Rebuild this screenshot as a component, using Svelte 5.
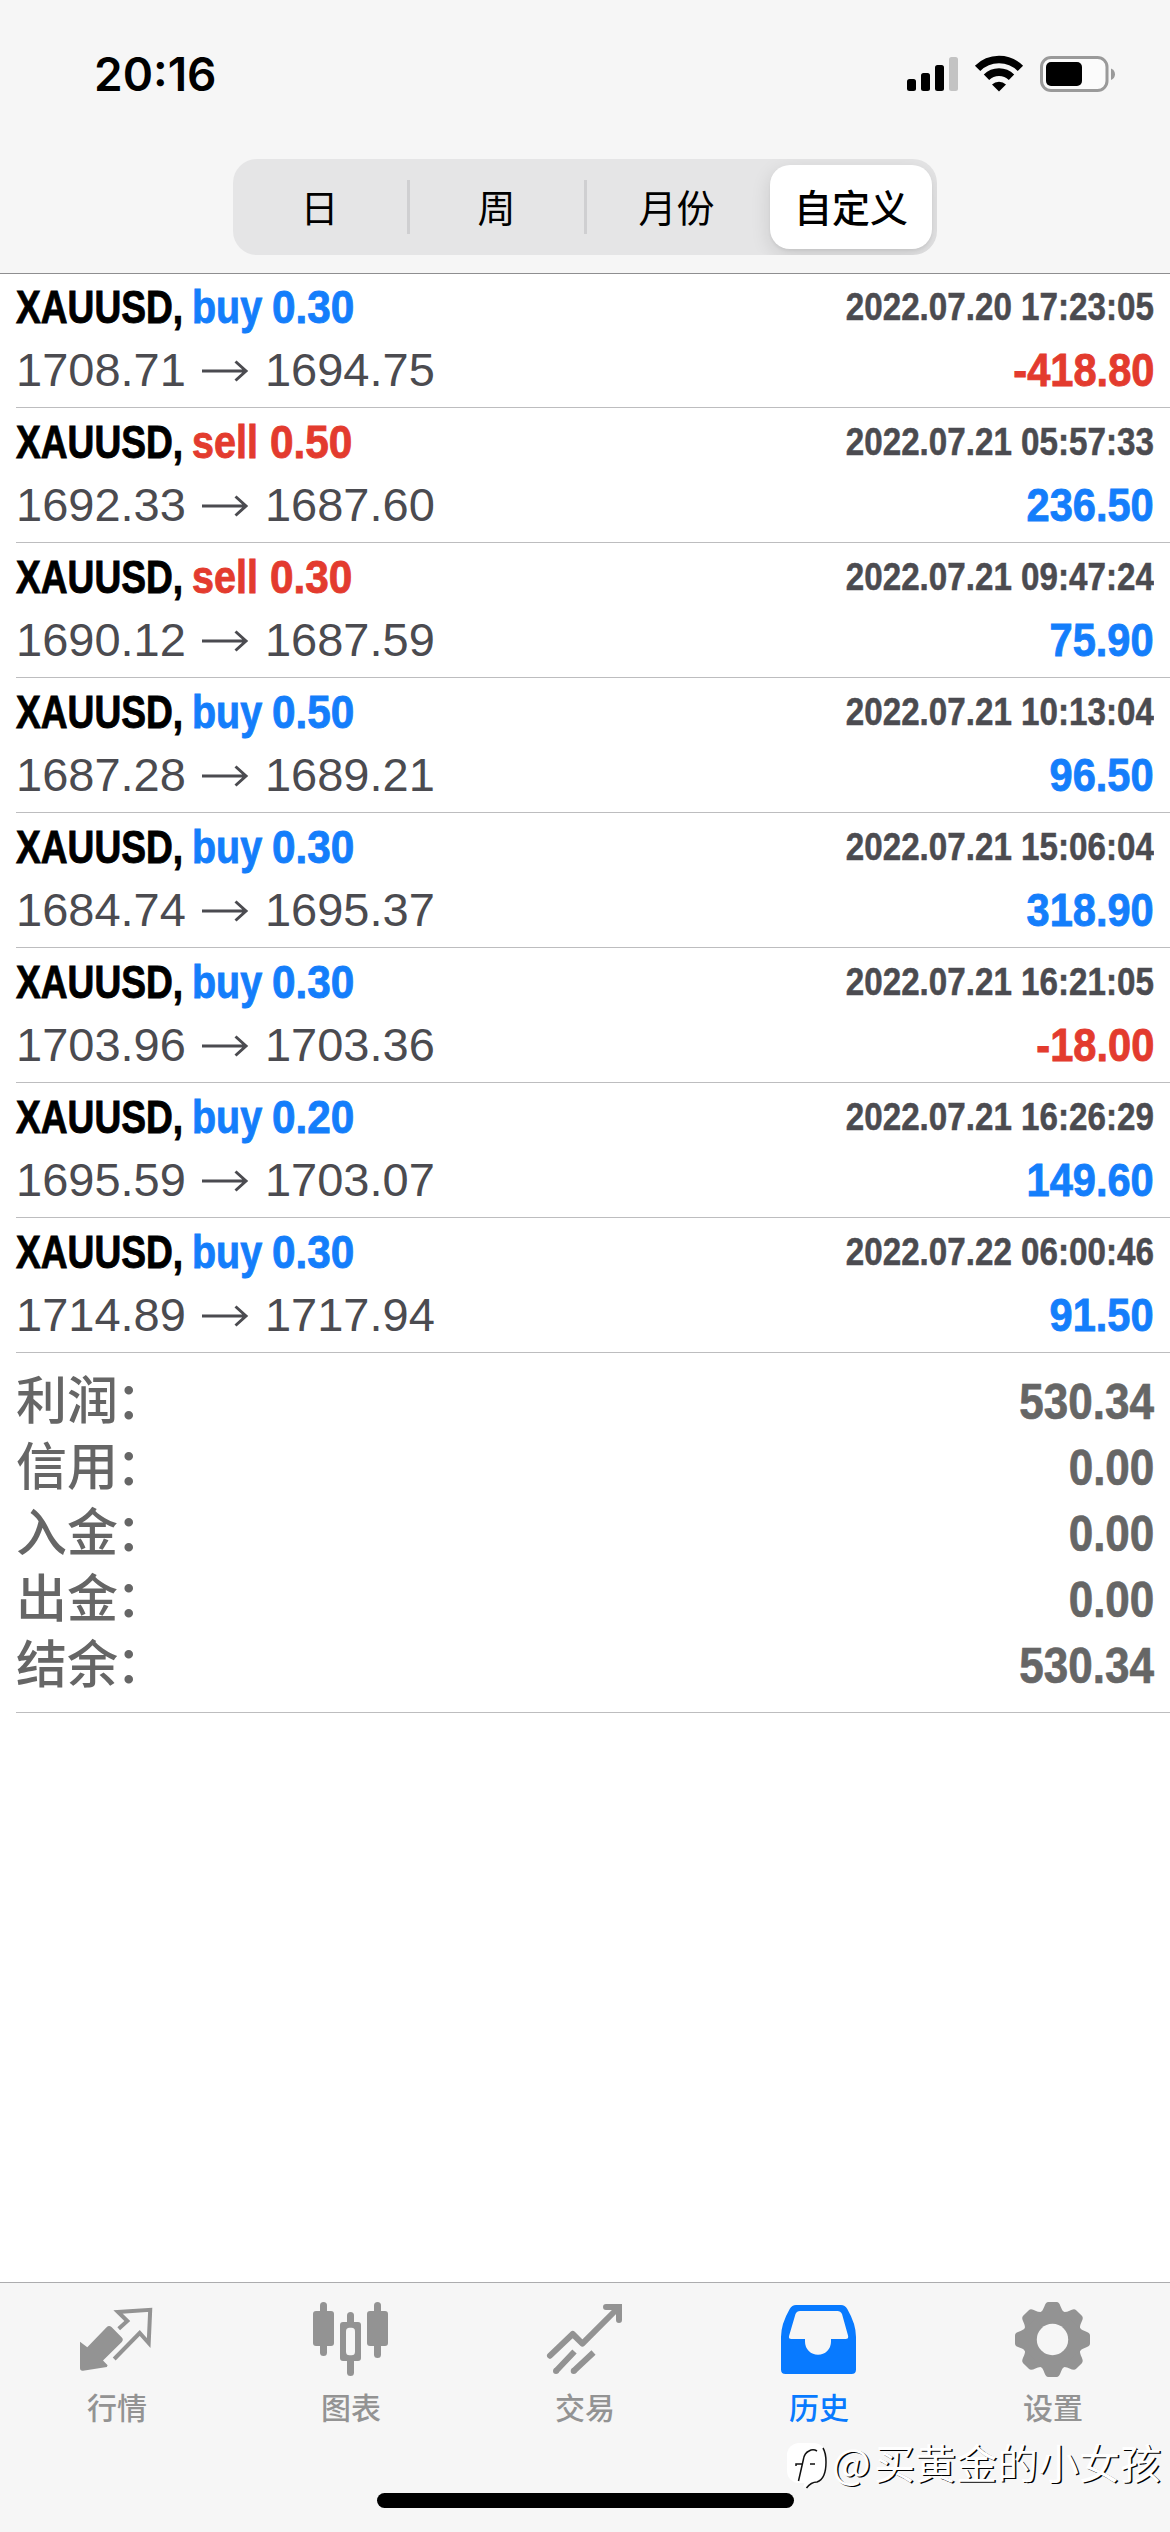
<script lang="ts">
  type Deal = {
    symbol: string;
    side: 'buy' | 'sell';
    volume: string;
    open: string;
    close: string;
    time: string;
    profit: string;
  };

  const periods = ['日', '周', '月份', '自定义'];
  let period = $state('自定义');

  const deals: Deal[] = [
    { symbol: 'XAUUSD', side: 'buy', volume: '0.30', open: '1708.71', close: '1694.75', time: '2022.07.20 17:23:05', profit: '-418.80' },
    { symbol: 'XAUUSD', side: 'sell', volume: '0.50', open: '1692.33', close: '1687.60', time: '2022.07.21 05:57:33', profit: '236.50' },
    { symbol: 'XAUUSD', side: 'sell', volume: '0.30', open: '1690.12', close: '1687.59', time: '2022.07.21 09:47:24', profit: '75.90' },
    { symbol: 'XAUUSD', side: 'buy', volume: '0.50', open: '1687.28', close: '1689.21', time: '2022.07.21 10:13:04', profit: '96.50' },
    { symbol: 'XAUUSD', side: 'buy', volume: '0.30', open: '1684.74', close: '1695.37', time: '2022.07.21 15:06:04', profit: '318.90' },
    { symbol: 'XAUUSD', side: 'buy', volume: '0.30', open: '1703.96', close: '1703.36', time: '2022.07.21 16:21:05', profit: '-18.00' },
    { symbol: 'XAUUSD', side: 'buy', volume: '0.20', open: '1695.59', close: '1703.07', time: '2022.07.21 16:26:29', profit: '149.60' },
    { symbol: 'XAUUSD', side: 'buy', volume: '0.30', open: '1714.89', close: '1717.94', time: '2022.07.22 06:00:46', profit: '91.50' },
  ];

  const summary = [
    { label: '利润', value: '530.34' },
    { label: '信用', value: '0.00' },
    { label: '入金', value: '0.00' },
    { label: '出金', value: '0.00' },
    { label: '结余', value: '530.34' },
  ];

  const tabs = [
    { id: 'quotes', label: '行情' },
    { id: 'chart', label: '图表' },
    { id: 'trade', label: '交易' },
    { id: 'history', label: '历史' },
    { id: 'settings', label: '设置' },
  ];
  let tab = $state('history');

  const teeth = [0, 45, 90, 135, 180, 225, 270, 315];
</script>

<div class="screen">
  <header class="top">
    <div class="status">
      <span class="clock">20:16</span>
      <div class="indicators">
        <svg class="signal" viewBox="0 0 52 36" aria-hidden="true">
          <rect x="0" y="23" width="9" height="12" rx="2.5" />
          <rect x="14" y="17" width="9" height="18" rx="2.5" />
          <rect x="28" y="9" width="9" height="26" rx="2.5" />
          <rect x="42" y="1" width="9" height="34" rx="2.5" fill="#c3c3c3" />
        </svg>
        <svg class="wifi" viewBox="0 0 50 38" aria-hidden="true">
          <g fill="none" stroke="#000" stroke-width="7.6">
            <path d="M3.6 13.4a30.2 30.2 0 0 1 42.8 0" />
            <path d="M12.5 22.3a17.6 17.6 0 0 1 25 0" />
          </g>
          <path d="M18 29.5a10 10 0 0 1 14 0L25 36.6z" />
        </svg>
        <svg class="battery" viewBox="0 0 76 38" aria-hidden="true">
          <rect x="1.5" y="2.5" width="65.5" height="33" rx="9.5" fill="#fbfbfb" stroke="#9a9a9a" stroke-width="3" />
          <rect x="6" y="7" width="36" height="24" rx="5" />
          <path d="M71 13.5c5.3 1.8 5.3 9.7 0 11.5z" fill="#9a9a9a" />
        </svg>
      </div>
    </div>

    <div class="segments">
      {#each periods as name (name)}
        <button class="segment" class:selected={name === period} onclick={() => (period = name)}>
          {name}
        </button>
      {/each}
    </div>
  </header>

  <main>
    {#each deals as deal (deal.time)}
      <article class="deal">
        <div class="line">
          <div class="title">
            <span class="symbol"><b>{deal.symbol},</b></span>
            <span class="side {deal.side}"><b>{deal.side}</b></span>
            <span class="volume {deal.side}"><b>{deal.volume}</b></span>
          </div>
          <span class="time">{deal.time}</span>
        </div>
        <div class="line">
          <div class="prices">
            <span>{deal.open}</span>
            <svg class="arrow" viewBox="0 0 48 24" aria-hidden="true">
              <path d="M1 12H45M34.5 2.5L45 12L34.5 21.5" />
            </svg>
            <span>{deal.close}</span>
          </div>
          <span class="profit" class:loss={deal.profit.startsWith('-')}>{deal.profit}</span>
        </div>
      </article>
    {/each}

    <section class="summary">
      {#each summary as item (item.label)}
        <div class="total">
          <span class="label">{item.label}<span class="colon">：</span></span>
          <span class="value">{item.value}</span>
        </div>
      {/each}
    </section>
  </main>

  <footer class="bottom">
    <nav class="tabs">
      {#each tabs as item (item.id)}
        <button class="tab" class:active={item.id === tab} onclick={() => (tab = item.id)}>
          <svg class="icon" viewBox="0 0 80 84" aria-hidden="true">
            {#if item.id === 'quotes'}
              <path d="M3 45.7L10.3 51.3L29.6 31.2Q32 28.8 34.5 31L44.8 41.5Q46.8 43.7 44.8 46L26 64.5L30.6 69.3L29.8 71L6 74.7Q3 75 3 72z" />
              <path class="thin" d="M41.7 32.7L50.3 25L41 16L73.2 13.8L71.7 47L62.7 37L37.2 63" />
            {:else if item.id === 'chart'}
              <rect x="9" y="6" width="7" height="54" rx="3.5" />
              <rect x="2" y="15" width="21" height="35" rx="3" />
              <rect x="63" y="6" width="7" height="56" rx="3.5" />
              <rect x="56" y="15" width="21" height="35" rx="3" />
              <rect x="36" y="16" width="7" height="64" rx="3.5" />
              <rect x="29" y="26" width="21" height="39" rx="3" />
              <rect class="hole" x="35" y="31.7" width="9" height="27.6" rx="3.5" />
            {:else if item.id === 'trade'}
              <path class="thick round" d="M5 59.7L27.7 38L37.4 47.6L72.5 12.5" />
              <path class="thick round" d="M61 11H74V24" />
              <path d="M66 8H77V19z" />
              <path class="thick" d="M11 75L29.5 55.5M28.7 75L48.5 56.5" />
              <circle cx="11" cy="75" r="3" />
              <circle cx="28.7" cy="75" r="3" />
            {:else if item.id === 'history'}
              <path d="M17 9H62Q66 9 68.3 13Q77 28 77 41V73.5Q77 78 72.5 78H6.5Q2 78 2 73.5V41Q2 28 10.7 13Q13 9 17 9z" />
              <path class="hole" d="M21 15H58.5Q61.5 15 63 18L69 39.5Q70 43 66.5 43H52V45.7A13 13 0 0 1 26 45.7V43H12.5Q9 43 10.2 39.5L16.5 18Q17.8 15 21 15z" />
            {:else}
              <g transform="translate(39.5 43.5)">
                <circle r="30" />
                {#each teeth as angle (angle)}
                  <path d="M-12 -27C-7.5 -30 -8.5 -37.5 -4 -37.5H4C8.5 -37.5 7.5 -30 12 -27z" transform="rotate({angle})" />
                {/each}
                <circle class="hole" r="15.7" />
              </g>
            {/if}
          </svg>
          <span>{item.label}</span>
        </button>
      {/each}
    </nav>
    <div class="home-indicator"></div>
  </footer>

  <div class="watermark">
    <svg viewBox="0 0 42 48" aria-hidden="true">
      <rect class="badge" x="1" y="1" width="39" height="40" rx="12" />
      <path class="badge" d="M19 39L17 46L27 40z" />
      <path d="M37 6Q40 11 40 20Q40 37 31 40Q25 40 20.5 46" />
      <path d="M31 9Q27 6.5 23 9Q18.5 11 17.5 17L12.5 39M10 24V22H16M24 22H29" />
    </svg>
    <span class="at">@</span><span>买黄金的小女孩</span>
  </div>
</div>

<style>
  :global(body) {
    background: #fff;
  }

  .screen {
    position: relative;
    display: flex;
    flex-direction: column;
    width: 1170px;
    height: 2532px;
    overflow: hidden;
    background: #fff;
    color: #000;
    font-family: 'Liberation Sans', 'Noto Sans CJK SC', sans-serif;
  }

  button {
    margin: 0;
    border: 0;
    padding: 0;
    background: none;
    color: inherit;
    font: inherit;
  }

  /* Status bar and period switch */
  .top {
    box-sizing: border-box;
    height: 273px;
    flex: none;
    background: #f6f6f6;
    box-shadow: 0 1px 0 #8e8e90;
  }

  .status {
    display: flex;
    align-items: center;
    justify-content: space-between;
    box-sizing: border-box;
    height: 159px;
    padding: 0 54px 11px 94px;
  }

  .clock {
    font-family: Inter, sans-serif;
    font-size: 46px;
    font-weight: 600;
  }

  .indicators {
    display: flex;
    align-items: center;
    height: 38px;
  }

  .signal {
    width: 52px;
    height: 36px;
  }

  .wifi {
    width: 50px;
    height: 38px;
    margin-left: 15px;
  }

  .battery {
    width: 76px;
    height: 38px;
    margin-left: 16px;
  }

  .segments {
    display: grid;
    grid-template-columns: 177px 177px 183px 162px;
    box-sizing: border-box;
    width: 704px;
    height: 96px;
    margin-left: 233px;
    border-radius: 24px;
    padding: 6px 5px 6px 0;
    background: #e5e5e6;
  }

  .segment {
    box-sizing: border-box;
    padding: 0 4px 3px 0;
    font-family: 'Noto Sans CJK SC', sans-serif;
    font-size: 38px;
    line-height: 80px;
  }

  .segment:nth-child(-n + 2) {
    background: linear-gradient(#cfcfd1, #cfcfd1) right 15px / 3px 54px no-repeat;
  }

  .segment.selected {
    border-radius: 20px;
    padding-right: 0;
    background: #fff;
    box-shadow: 0 6px 20px rgba(0, 0, 0, 0.12), 0 2px 3px rgba(0, 0, 0, 0.05);
    clip-path: inset(-6px -5px -6px -24px round 24px);
    font-weight: 500;
  }

  /* Deals */
  .deal {
    box-sizing: border-box;
    height: 135px;
    margin-left: 16px;
    border-bottom: 1px solid #bdbdbf;
    padding: 2px 16px 0 0;
  }

  .line {
    display: flex;
    justify-content: space-between;
    height: 63px;
    line-height: 63px;
    white-space: nowrap;
  }

  .title {
    display: flex;
    font-size: 47px;
    -webkit-text-stroke: 0.9px currentColor;
  }

  .title b {
    display: inline-block;
    transform-origin: left;
  }

  .symbol {
    width: 176px;
  }

  .symbol b {
    transform: scaleX(0.79);
  }

  .side.buy {
    width: 80px;
  }

  .side.sell {
    width: 78px;
  }

  .side b {
    transform: scaleX(0.84);
  }

  .volume b {
    transform: scaleX(0.9);
  }

  .buy {
    color: #147efb;
  }

  .sell {
    color: #e33b2e;
  }

  .time {
    padding-top: 1px;
    color: #4b4b50;
    font-size: 38px;
    font-weight: 700;
    -webkit-text-stroke: 0.5px currentColor;
    transform: scaleX(0.873);
    transform-origin: right;
  }

  .prices {
    display: flex;
    align-items: center;
    color: #4b4b50;
    font-size: 47px;
  }

  .arrow {
    width: 48px;
    height: 24px;
    margin: 2px 16px 0 15px;
    fill: none;
    stroke: #4b4b50;
    stroke-width: 3;
  }

  .profit {
    color: #147efb;
    font-size: 47px;
    font-weight: 700;
    -webkit-text-stroke: 0.9px currentColor;
    transform: scaleX(0.885);
    transform-origin: right;
  }

  .profit.loss {
    color: #e33b2e;
  }

  .summary {
    margin-left: 16px;
    border-bottom: 1px solid #bdbdbf;
    padding: 16px 16px 13px 0;
    color: #666;
  }

  .total {
    display: flex;
    justify-content: space-between;
    height: 66px;
    line-height: 66px;
  }

  .label {
    font-size: 51px;
    font-weight: 500;
  }

  .colon {
    margin-left: -2px;
  }

  .value {
    font-size: 50px;
    font-weight: 700;
    -webkit-text-stroke: 0.7px currentColor;
    transform: scaleX(0.88);
    transform-origin: right;
  }

  /* Tab bar */
  .bottom {
    box-sizing: border-box;
    height: 250px;
    margin-top: auto;
    border-top: 1px solid #acacae;
    background: #f6f6f6;
  }

  .tabs {
    display: grid;
    grid-template-columns: repeat(5, 1fr);
    height: 210px;
  }

  .tab {
    display: flex;
    flex-direction: column;
    align-items: center;
    padding-top: 13px;
    color: #939393;
    font-family: 'Noto Sans CJK SC', sans-serif;
    font-size: 30px;
    font-weight: 500;
    line-height: 40px;
  }

  .tab.active {
    color: #087aff;
  }

  .icon {
    width: 80px;
    height: 84px;
    margin-bottom: 6px;
    fill: currentColor;
  }

  .thin,
  .thick {
    fill: none;
    stroke: currentColor;
  }

  .thin {
    stroke-width: 4;
  }

  .thick {
    stroke-width: 6;
  }

  .round {
    stroke-linecap: round;
    stroke-linejoin: round;
  }

  .hole {
    fill: #f6f6f6;
  }

  .home-indicator {
    width: 417px;
    height: 15px;
    margin: 0 auto;
    border-radius: 8px;
    background: #000;
  }

  .watermark {
    position: absolute;
    right: 9px;
    bottom: 41px;
    display: flex;
    align-items: center;
    color: #fff;
    font-family: 'Noto Sans CJK SC', sans-serif;
    font-size: 41px;
    line-height: 60px;
    text-shadow: 1.5px 1px 0 #000;
    white-space: nowrap;
  }

  .watermark svg {
    width: 42px;
    height: 48px;
    margin: 10px 4px 0 0;
    fill: none;
    stroke: #111;
    stroke-width: 1.5;
  }

  .watermark .badge {
    fill: #fff;
    stroke: none;
  }

  .at {
    width: 42px;
  }
</style>
